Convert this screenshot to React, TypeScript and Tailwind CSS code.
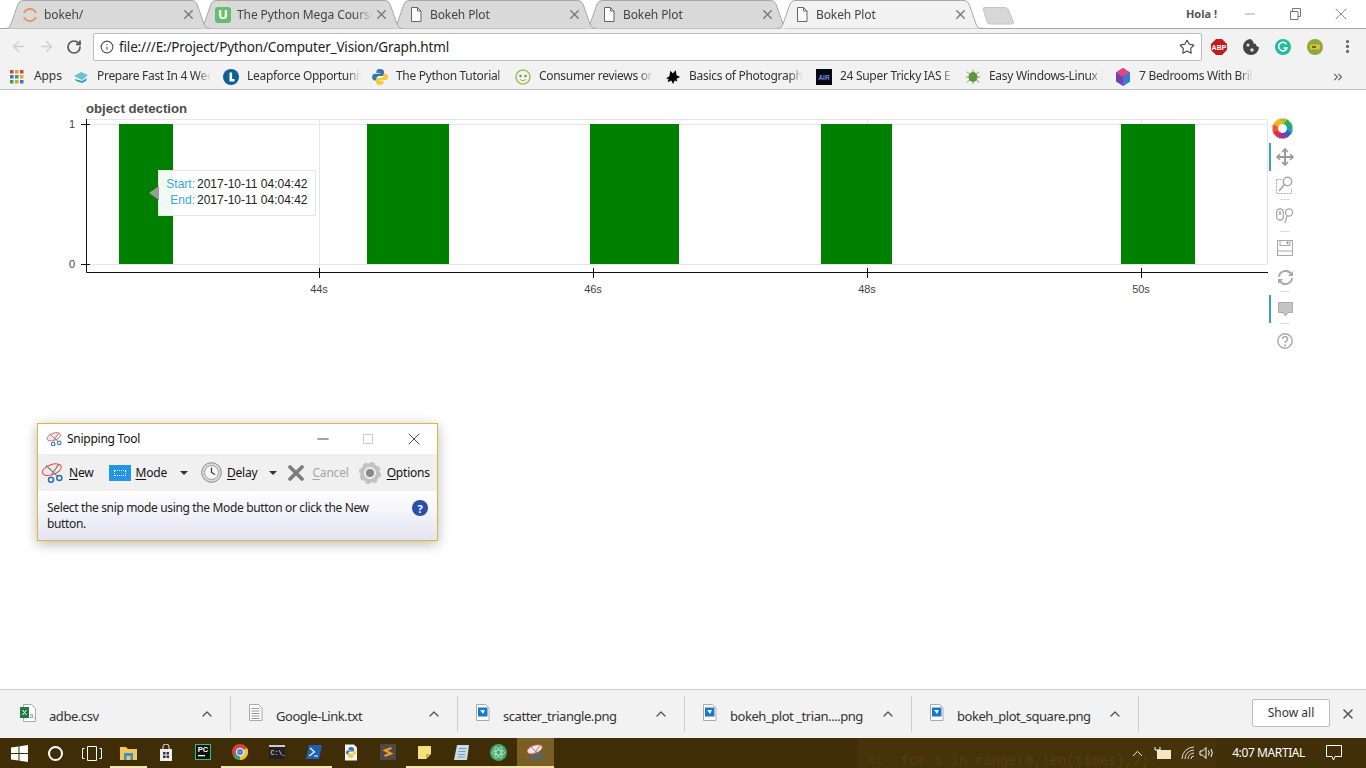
import React from "react";
import { ArrowLeft, ArrowRight, RotateCw, Info, Star, X, Minus, ChevronUp, ChevronsRight, MoreVertical } from "lucide-react";

const UI = "font-['Noto_Sans',sans-serif]";

function TabShape({ active }: { active?: boolean }) {
  return (
    <svg className="absolute inset-0" width="205" height="29" viewBox="0 0 205 29">
      <path
        d="M0 28.5 L3 28 Q5 27 6 24 L13 4 Q14.5 0.5 18 0.5 L187 0.5 Q190.5 0.5 192 4 L199 24 Q200 27 202 28 L205 28.5"
        fill={active ? "#f2f2f2" : "#d9d9d9"}
        stroke="#a8a8a8"
        strokeWidth="1"
      />
    </svg>
  );
}

function PageIcon() {
  return (
    <svg width="12" height="15" viewBox="0 0 12 15" fill="none" stroke="#666" strokeWidth="1">
      <path d="M1.5 .5h6l3.5 3.5v10.5h-9.5z" fill="#fafafa" />
      <path d="M7.5 .5v3.5h3.5" />
    </svg>
  );
}

const tabs = [
  {
    title: "bokeh/",
    z: "z-[5]",
    icon: (
      <svg width="16" height="16" viewBox="0 0 16 16" fill="none" stroke="#f0905a" strokeWidth="1.8">
        <path d="M2 6a6.5 6.5 0 0 1 12 0" />
        <path d="M2 10a6.5 6.5 0 0 0 12 0" />
      </svg>
    ),
  },
  {
    title: "The Python Mega Course",
    z: "z-[4]",
    icon: (
      <span className="flex h-4 w-4 items-center justify-center rounded-[3px] bg-[#68bd6c] text-[13px] font-bold leading-none text-white">U</span>
    ),
  },
  { title: "Bokeh Plot", z: "z-[3]", icon: <PageIcon /> },
  { title: "Bokeh Plot", z: "z-[2]", icon: <PageIcon /> },
  { title: "Bokeh Plot", z: "z-[6]", icon: <PageIcon />, active: true },
];

function TabStrip() {
  return (
    <div className="relative flex h-[29px] shrink-0 bg-white pl-[5px]">
      <div className="absolute bottom-0 left-0 right-0 h-px bg-[#a8a8a8]" />
      {tabs.map((t, i) => (
        <div key={i} className={`relative -mr-3 flex h-[29px] w-[205px] shrink-0 items-center pl-[16px] pr-[14px] ${t.z}`}>
          <TabShape active={t.active} />
          <div className="relative flex w-[18px] shrink-0 items-center justify-center">{t.icon}</div>
          <div className="relative ml-[5px] min-w-0 flex-1 whitespace-nowrap text-[12px] leading-[28px] tracking-[-0.1px] text-[#444] [mask-image:linear-gradient(to_right,black_86%,transparent)]">
            {t.title}
          </div>
          <X className="relative ml-[1px] shrink-0" size={15} strokeWidth={2.2} color="#777" />
        </div>
      ))}
      <svg className="relative z-[1] ml-[12px] mt-[7px] shrink-0" width="33" height="18" viewBox="0 0 33 18">
        <path d="M1 1.5 Q1 .5 3 .5 H23 Q25 .5 26 2 L31.500 15 Q32 17 30 17 H8 Q6 17 5 15 Z" fill="#d7d7d7" stroke="#c6c6c6" />
      </svg>
      <div className="relative ml-auto flex h-[28px] items-center pr-[15px]">
        <span className="mr-[25px] text-[11px] font-bold text-[#555]">Hola !</span>
        <Minus size={16} strokeWidth={1} color="#777" className="mr-[32px]" />
        <svg className="mr-[30px]" width="11" height="12" viewBox="0 0 11 12" fill="none" stroke="#777">
          <path d="M2.5 3V.5h8v8H8M.5 3.5h7.5v8H.5z" />
        </svg>
        <X size={20} strokeWidth={0.9} color="#666" />
      </div>
    </div>
  );
}

function AddressBar() {
  return (
    <div className="flex h-[35px] shrink-0 items-center bg-[#f2f2f2]">
      <ArrowLeft className="ml-[10px]" size={17} strokeWidth={2} color="#cfcfcf" />
      <ArrowRight className="ml-[11px]" size={17} strokeWidth={2} color="#cfcfcf" />
      <RotateCw className="ml-[11px]" size={16} strokeWidth={2.6} color="#555" />
      <div className="ml-[11px] flex h-[28px] w-[1109px] shrink-0 items-center rounded-[2px] border border-[#bdbdbd] bg-white pl-[6px] pr-[6px]">
        <Info size={14} strokeWidth={2} color="#555" />
        <span className="ml-[5px] mt-[2px] text-[13.5px] tracking-[-0.16px] text-[#222]">file:///E:/Project/Python/Computer_Vision/Graph.html</span>
        <Star className="ml-auto" size={16} strokeWidth={1.8} color="#555" />
      </div>
      <div className="ml-[9px] flex items-center gap-[16px]">
        <svg width="16" height="16" viewBox="0 0 16 16">
          <path d="M5 0h6l5 5v6l-5 5H5l-5-5V5z" fill="#c41a1a" />
          <text x="8" y="10.5" textAnchor="middle" fontSize="7" fontWeight="700" fill="#fff" fontFamily="Liberation Sans">ABP</text>
        </svg>
        <svg width="16" height="16" viewBox="0 0 16 16">
          <path d="M8 0a8 8 0 1 0 8 8 3 3 0 0 1-3-3 3 3 0 0 1-3-3 3 3 0 0 1-2-2z" fill="#444" />
          <circle cx="5" cy="6" r="1.6" fill="#ddd" />
          <circle cx="9" cy="11" r="1.8" fill="#ddd" />
        </svg>
        <svg width="16" height="16" viewBox="0 0 16 16">
          <circle cx="8" cy="8" r="8" fill="#1fbf8f" />
          <path d="M11.5 5.2A4.3 4.3 0 1 0 12 9H8.5" fill="none" stroke="#fff" strokeWidth="1.6" />
        </svg>
        <svg width="16" height="16" viewBox="0 0 16 16">
          <circle cx="8" cy="8" r="8" fill="#8caa3a" />
          <rect x="3" y="5.5" width="10" height="5" fill="#e0bd3a" />
          <rect x="5" y="7" width="4" height="2" fill="#5c6a22" />
        </svg>
        <MoreVertical size={17} strokeWidth={2.6} color="#666" />
      </div>
    </div>
  );
}

const bookmarks = [
  {
    t: "Prepare Fast In 4 Wee",
    w: "w-[150px]",
    icon: (
      <svg width="16" height="14" viewBox="0 0 16 14">
        <path d="M1 6l7-4 7 3-6 5z" fill="#66c2d8" />
        <path d="M2 9l7 2 5-3-1 3-4 2-6-2z" fill="#2f9cb8" />
      </svg>
    ),
  },
  {
    t: "Leapforce Opportunit",
    w: "w-[149px]",
    icon: (
      <svg width="16" height="16" viewBox="0 0 16 16">
        <circle cx="8" cy="8" r="8" fill="#0e5f94" />
        <path d="M6.5 3.5h2.6v6.5h2.4v2.4h-5z" fill="#fff" />
      </svg>
    ),
  },
  {
    t: "The Python Tutorial",
    w: "w-[143px]",
    icon: (
      <svg width="16" height="16" viewBox="0 0 16 16">
        <path d="M8 0C5 0 4.500 1.200 4.500 2.500V4H8.200v.7H3C1.200 4.700 0 6 0 8s1.200 3.500 3 3.500h1.500V9.500C4.500 8 5.700 7 7 7h3c1.200 0 2-.8 2-2V2.500C12 1 10.500 0 8 0z" fill="#3a76a8" />
        <path d="M8 16c3 0 3.500-1.200 3.500-2.500V12H7.800v-.7H13c1.800 0 3-1.300 3-3.300s-1.200-3.500-3-3.500h-1.500v2C11.500 8 10.300 9 9 9H6c-1.200 0-2 .8-2 2v2.500C4 15 5.500 16 8 16z" fill="#f4c93c" />
      </svg>
    ),
  },
  {
    t: "Consumer reviews on",
    w: "w-[150px]",
    icon: (
      <svg width="16" height="16" viewBox="0 0 16 16">
        <circle cx="8" cy="8" r="7" fill="#f4f6e4" stroke="#9cc36a" strokeWidth="1.6" />
        <circle cx="5.500" cy="7" r="1.300" fill="#5a8ec0" />
        <circle cx="10.500" cy="7" r="1.300" fill="#5a8ec0" />
        <path d="M5 10.500q3 2.500 6 0" fill="none" stroke="#c79a4a" />
      </svg>
    ),
  },
  {
    t: "Basics of Photograph",
    w: "w-[151px]",
    icon: (
      <svg width="18" height="18" viewBox="0 0 18 18">
        <path d="M1 11l4-3 1-6 3 3 3-4 1 6 4 2-4 2 1 3-3-1-2 4-2-4-4 2 1-4z" fill="#050505" />
      </svg>
    ),
  },
  {
    t: "24 Super Tricky IAS E",
    w: "w-[149px]",
    icon: (
      <svg width="16" height="16" viewBox="0 0 16 16">
        <rect width="16" height="16" fill="#06070f" />
        <text x="8" y="10.500" textAnchor="middle" fontSize="6.500" fontWeight="700" fill="#6c8ce0" fontFamily="Liberation Sans">AIR</text>
      </svg>
    ),
  },
  {
    t: "Easy Windows-Linux I",
    w: "w-[150px]",
    icon: (
      <svg width="18" height="18" viewBox="0 0 18 18">
        <g stroke="#6b9a40" strokeWidth="1">
          <path d="M2 3l14 12M16 3L2 15M1 9h16M9 1v16" />
        </g>
        <ellipse cx="9" cy="9" rx="5" ry="5.500" fill="#5f9440" />
      </svg>
    ),
  },
  {
    t: "7 Bedrooms With Bril",
    w: "w-[153px]",
    icon: (
      <svg width="16" height="18" viewBox="0 0 16 18">
        <path d="M8 0l7 4.500v9L8 18l-7-4.500v-9z" fill="#7a3db0" />
        <path d="M8 0l7 4.500L8 9 1 4.500z" fill="#e2457f" />
        <path d="M8 9l7-4.500v9L8 18z" fill="#2f7fd6" />
      </svg>
    ),
  },
];

function Bookmarks() {
  return (
    <div className="flex h-[26px] shrink-0 items-center border-b border-[#c4c4c4] bg-[#f2f2f2] pl-[10px]">
      <svg width="14" height="14" viewBox="0 0 14 14" className="shrink-0">
        {[0, 5, 10].map((y) =>
          [0, 5, 10].map((x) => (
            <rect key={`${x}${y}`} x={x} y={y} width="3.500" height="3.500" fill={y === 0 ? (x === 5 ? "#e0a030" : "#d8483a") : y === 5 ? (x === 0 ? "#3b78c8" : x === 5 ? "#40a060" : "#e0b030") : x === 0 ? "#40a060" : x === 5 ? "#e0a030" : "#3b78c8"} />
          ))
        )}
      </svg>
      <span className="ml-[10px] -mt-[2px] w-[39px] shrink-0 text-[12px] tracking-[-0.1px] text-[#333]">Apps</span>
      {bookmarks.map((b) => (
        <div key={b.t} className={`flex shrink-0 items-center ${b.w}`}>
          <div className="flex w-[16px] shrink-0 justify-center">{b.icon}</div>
          <div className="ml-[8px] -mt-[2px] w-[114px] whitespace-nowrap text-[12px] tracking-[-0.3px] text-[#333] [mask-image:linear-gradient(to_right,black_88%,transparent)]">{b.t}</div>
        </div>
      ))}
      <ChevronsRight className="ml-[63px] shrink-0" size={14} strokeWidth={2} color="#666" />
    </div>
  );
}

const bars: [number, number][] = [
  [119, 173],
  [367, 449],
  [590, 679],
  [821, 892],
  [1121, 1195],
];

function Chart() {
  const f = "Liberation Sans";
  return (
    <svg className="absolute left-0 top-0" width="1270" height="210" viewBox="0 90 1270 210">
      <text x="86" y="113" fontFamily={f} fontSize="13.200" fontWeight="700" fill="#4d4d4d">object detection</text>
      <path d="M87 119.500H1267.500V264" fill="none" stroke="#e6e6e6" />
      {[319, 593, 867, 1141].map((x) => (
        <path key={x} d={`M${x}.5 119V272`} stroke="#e6e6e6" />
      ))}
      <path d="M87 124.500H1267M87 264.500H1267" stroke="#e6e6e6" />
      {bars.map(([a, b]) => (
        <rect key={a} x={a} y={124} width={b - a} height={140} fill="#008000" />
      ))}
      <path d="M86.500 119V272.500H1268" fill="none" stroke="#111" />
      <path d="M81 124.500H90M81 264.500H90" stroke="#111" />
      {[319, 593, 867, 1141].map((x) => (
        <path key={x} d={`M${x}.5 268V278`} stroke="#111" />
      ))}
      <text x="75" y="128" textAnchor="end" fontFamily={f} fontSize="11" fill="#444">1</text>
      <text x="75" y="268" textAnchor="end" fontFamily={f} fontSize="11" fill="#444">0</text>
      {[
        [319, "44s"],
        [593, "46s"],
        [867, "48s"],
        [1141, "50s"],
      ].map(([x, s]) => (
        <text key={s as string} x={x as number} y="293" textAnchor="middle" fontFamily={f} fontSize="11" fill="#444">{s}</text>
      ))}
    </svg>
  );
}

function Tooltip() {
  return (
    <div className="absolute left-[158px] top-[80px] h-[46px] w-[158px] border border-[#e5e5e5] bg-white/95 pl-[7px] pt-[5px] font-['Liberation_Sans',sans-serif] text-[12px] leading-[16px]">
      <div className="absolute left-[-10px] top-[15px] h-0 w-0 border-y-[7px] border-r-[10px] border-y-transparent border-r-[#9a9a9a]" />
      <div className="flex whitespace-nowrap"><span className="w-[29px] text-right text-[#3aa8d8]">Start:</span><span className="ml-[2px] text-[#222]">2017-10-11 04:04:42</span></div>
      <div className="flex whitespace-nowrap"><span className="w-[29px] text-right text-[#3aa8d8]">End:</span><span className="ml-[2px] text-[#222]">2017-10-11 04:04:42</span></div>
    </div>
  );
}

function ToolSep() {
  return <div className="ml-[11px] h-px w-[10px] bg-[#dcdcdc]" />;
}

function BokehLogo() {
  const colors = ["#9cc43a", "#2fae5a", "#1a9fc0", "#3a5fb8", "#a3308e", "#e0305a", "#ee5a2a", "#f6b32a"];
  return (
    <svg width="21" height="21" viewBox="-10.500 -10.500 21 21">
      {colors.map((c, i) => (
        <path key={c} d="M-3.500 -10L3.500 -10L5.500 -3.500L0 -4.500L-2 -4z" fill={c} transform={`rotate(${i * 45})`} />
      ))}
    </svg>
  );
}

function BokehTools() {
  const c = "#a9a9a9";
  return (
    <div className="ml-[-1px] flex w-[30px] shrink-0 flex-col pt-[28px]">
      <div className="flex h-[21px] items-center justify-center pr-[3px]"><BokehLogo /></div>
      <div className="mt-[4px] flex h-[28px] items-center justify-center border-l-2 border-[#3aa0c0]">
        <svg width="20" height="20" viewBox="0 0 20 20" fill="none" stroke="#9a9a9a" strokeWidth="2">
          <path d="M10 2v16M2 10h16" />
          <path d="M7 5l3-3 3 3M7 15l3 3 3-3M5 7l-3 3 3 3M15 7l3 3-3 3" strokeWidth="1.600" />
        </svg>
      </div>
      <div className="flex h-[28px] items-center justify-center pl-[2px]">
        <svg width="18" height="18" viewBox="0 0 18 18" fill="none" stroke={c}>
          <path d="M.5 3.500h6M.5 3.500v14h15v-5" strokeDasharray="2 1" />
          <circle cx="11.500" cy="5.500" r="4.200" strokeWidth="1.500" />
          <path d="M8.500 8.500L3 15" strokeWidth="1.800" />
        </svg>
      </div>
      <ToolSep />
      <div className="flex h-[31px] items-center justify-center pl-[2px]">
        <svg width="18" height="16" viewBox="0 0 18 16" fill="none" stroke={c} strokeWidth="1.300">
          <rect x=".7" y="1" width="6.600" height="11" rx="3" />
          <rect x="2.800" y="3" width="2.400" height="4" fill="#bbb" stroke="none" />
          <circle cx="13" cy="4.500" r="3.600" />
          <path d="M11 8l-2 7" />
        </svg>
      </div>
      <ToolSep />
      <div className="flex h-[32px] items-center justify-center pl-[2px]">
        <svg width="16" height="16" viewBox="0 0 16 16" fill="none" stroke={c} strokeWidth="1.100">
          <rect x=".5" y=".5" width="15" height="15" />
          <path d="M3 .5v5h10v-5M.5 11h15" />
          <rect x="9.500" y="1.500" width="2" height="2.500" fill="#999" stroke="none" />
        </svg>
      </div>
      <div className="flex h-[27px] items-center justify-center pl-[2px]">
        <svg width="17" height="17" viewBox="0 0 17 17" fill="none" stroke={c} strokeWidth="2">
          <path d="M2 8a6.500 6.500 0 0 1 12-3M15 9a6.500 6.500 0 0 1-12 3" />
          <path d="M16 7H11l5-5zM1 10h5l-5 5z" fill={c} stroke="none" />
        </svg>
      </div>
      <div className="ml-[11px] h-px w-[10px] bg-[#dcdcdc]" />
      <div className="mt-[3px] flex h-[28px] items-center justify-center border-l-2 border-[#3aa0c0]">
        <svg width="15" height="15" viewBox="0 0 15 15">
          <path d="M.5 .5h14v10h-4.500l-2.500 3.500-2.500-3.500h-4.500z" fill="#c4c4c4" stroke="#aaa" />
        </svg>
      </div>
      <ToolSep />
      <div className="flex h-[33px] items-center justify-center pl-[2px]">
        <svg width="16" height="16" viewBox="0 0 16 16" fill="none" stroke={c} strokeWidth="1.400">
          <circle cx="8" cy="8" r="7.200" />
          <path d="M5.500 6a2.500 2.500 0 1 1 3.800 2.100c-.9.600-1.300 1-1.300 2" strokeWidth="1.600" />
          <circle cx="8" cy="12.300" r="1" fill={c} stroke="none" />
        </svg>
      </div>
    </div>
  );
}

function ScissorsIcon({ s = 30 }: { s?: number }) {
  return (
    <svg width={s} height={(s * 24) / 30} viewBox="0 0 30 24" fill="none">
      <ellipse cx="13" cy="8" rx="12" ry="6" stroke="#d94a4a" strokeWidth="1.200" transform="rotate(-20 13 8)" fill="#f4e6e6" />
      <path d="M6 3l14 13M21 2L12 15" stroke="#777" strokeWidth="1.300" />
      <circle cx="22" cy="18" r="3" stroke="#2a6fb5" strokeWidth="1.800" />
      <circle cx="12" cy="20" r="3" stroke="#2a6fb5" strokeWidth="1.800" />
    </svg>
  );
}

function U({ children }: { children: React.ReactNode }) {
  return <span className="underline underline-offset-2">{children}</span>;
}

function Caret() {
  return <div className="h-0 w-0 border-x-[4px] border-t-[4px] border-x-transparent border-t-[#333]" />;
}

function SnippingTool() {
  return (
    <div className="absolute left-[37px] top-[333px] z-10 h-[118px] w-[401px] border border-[#e8b33a] bg-white font-['Noto_Sans',sans-serif] text-[12px] text-[#111] shadow-[0_3px_12px_rgba(0,0,0,0.28)]">
      <div className="flex h-[30px] items-center pl-[8px]">
        <ScissorsIcon s={18} />
        <span className="ml-[3px] text-[12px] tracking-[-0.25px]">Snipping Tool</span>
        <Minus className="ml-auto" size={18} strokeWidth={1.100} color="#222" />
        <div className="ml-[31px] h-[10px] w-[10px] border border-[#ccc]" />
        <X className="ml-[31px] mr-[13px]" size={20} strokeWidth={1} color="#222" />
      </div>
      <div className="flex h-[37px] items-center bg-[#f0f0f0] pl-[3px] tracking-[-0.2px]">
        <ScissorsIcon s={25} />
        <span className="ml-[3px]"><U>N</U>ew</span>
        <div className="ml-[16px] flex h-[16px] w-[22px] items-center justify-center bg-[#2196e8]">
          <div className="h-[6px] w-[12px] border border-dotted border-white" />
        </div>
        <span className="ml-[4px]"><U>M</U>ode</span>
        <div className="ml-[13px]"><Caret /></div>
        <svg className="ml-[13px]" width="21" height="21" viewBox="0 0 21 21" fill="none">
          <circle cx="10.500" cy="10.500" r="9.800" fill="#ddd" stroke="#888" />
          <circle cx="10.500" cy="10.500" r="7" fill="#f6f6f6" stroke="#999" />
          <path d="M10.500 5.500v5l3.500 2" stroke="#333" strokeWidth="1.200" />
        </svg>
        <span className="ml-[5px]"><U>D</U>elay</span>
        <div className="ml-[12px]"><Caret /></div>
        <X className="ml-[7px]" size={24} strokeWidth={3.800} color="#7d7d7d" />
        <span className="ml-[4px] text-[#a5a5a5]"><U>C</U>ancel</span>
        <svg className="ml-[10px]" width="22" height="22" viewBox="0 0 22 22">
          <circle cx="11" cy="11" r="8" fill="none" stroke="#c2c2c2" strokeWidth="4" />
          <circle cx="11" cy="11" r="10" fill="none" stroke="#c2c2c2" strokeWidth="2.400" strokeDasharray="4 3.900" />
          <circle cx="11" cy="11" r="4" fill="#8a8a8a" />
        </svg>
        <span className="ml-[6px]"><U>O</U>ptions</span>
      </div>
      <div className="flex h-[49px] bg-gradient-to-b from-white to-[#e4e4f2] pl-[9px] pr-[9px] pt-[9px]">
        <p className="w-[345px] leading-[16px] tracking-[-0.35px] text-[#222]">Select the snip mode using the Mode button or click the New button.</p>
        <div className="ml-auto flex h-[16px] w-[16px] items-center justify-center rounded-full bg-[#2b4fa8] text-[11px] font-bold leading-none text-white">?</div>
      </div>
    </div>
  );
}

function DocIcon({ kind }: { kind: "xls" | "txt" | "png" }) {
  if (kind === "xls") {
    return (
      <svg width="16" height="18" viewBox="0 0 16 18" fill="none">
        <path d="M3.500 .5h8l4 4v13h-12z" fill="#fff" stroke="#aaa" />
        <rect y="3" width="9" height="11" fill="#1f7a44" />
        <path d="M2.500 6l4 5M6.500 6l-4 5" stroke="#fff" />
        <text x="9.500" y="14" fontSize="7" fill="#888" fontFamily="Liberation Sans">a,</text>
      </svg>
    );
  }
  return (
    <svg width="16" height="17" viewBox="0 0 16 17" fill="none">
      <path d="M.5 .5h9l3.500 3.500v12.500h-12.500z" fill="#fff" stroke="#aaa" />
      {kind === "txt" && <path d="M2.500 4.500h8M2.500 7h8M2.500 9.500h8M2.500 12h8M2.500 14.500h8" stroke="#999" />}
      {kind === "png" && (
        <>
          <rect x="2" y="3.500" width="9.500" height="9" fill="#1c76c9" />
          <path d="M4 6h5l-2 4z" fill="#dff" />
        </>
      )}
    </svg>
  );
}

const downloads: { n: string; k: "xls" | "txt" | "png" }[] = [
  { n: "adbe.csv", k: "xls" },
  { n: "Google-Link.txt", k: "txt" },
  { n: "scatter_triangle.png", k: "png" },
  { n: "bokeh_plot _trian....png", k: "png" },
  { n: "bokeh_plot_square.png", k: "png" },
];

function Downloads() {
  return (
    <div className="flex h-[49px] shrink-0 items-center border-t border-[#cfcfcf] bg-[#f2f2f2]">
      {downloads.map((d, i) => (
        <div key={d.n} className={`flex h-[36px] items-center border-r border-[#cdcdcd] ${i === 0 ? "w-[231px] pl-[20px]" : "w-[227px] pl-[18px]"}`}>
          <div className="-mt-[3px] w-[16px] shrink-0"><DocIcon kind={d.k} /></div>
          <span className={`mt-[5px] text-[13px] tracking-[-0.45px] text-[#333] ${i === 0 ? "ml-[13px]" : "ml-[11px]"}`}>{d.n}</span>
          <ChevronUp className="ml-auto mr-[15px]" size={16} strokeWidth={2} color="#555" />
        </div>
      ))}
      <button className="mb-[2px] ml-auto h-[28px] w-[78px] rounded-[2px] border border-[#bdbdbd] bg-white text-[12px] text-[#333]">Show all</button>
      <X className="ml-[10px] mr-[10px]" size={16} strokeWidth={2.400} color="#555" />
    </div>
  );
}

const taskIcons: { el: React.ReactNode; on?: boolean; active?: boolean }[] = [
  {
    on: true,
    el: (
      <svg width="17" height="15" viewBox="0 0 17 15">
        <path d="M0 2h6l2 2h9v11H0z" fill="#f2c65a" />
        <path d="M4 8h9v7h-2.500v-4h-4v4H4z" fill="#3a93c8" />
      </svg>
    ),
  },
  {
    el: (
      <svg width="14" height="17" viewBox="0 0 14 17">
        <path d="M1 5h12v12H1z" fill="#eee" />
        <path d="M4 5V2.500a3 2.500 0 0 1 6 0V5" fill="none" stroke="#eee" />
        <path d="M4 8h2.500v2.500H4zM7.500 8H10v2.500H7.500zM4 11.500h2.500V14H4zM7.500 11.500H10V14H7.500z" fill="#333" />
      </svg>
    ),
  },
  {
    el: (
      <svg width="16" height="16" viewBox="0 0 16 16">
        <rect x=".5" y=".5" width="15" height="15" fill="#111" stroke="#22c28c" />
        <text x="8" y="8" textAnchor="middle" fontSize="7.500" fontWeight="700" fill="#fff" fontFamily="Liberation Sans">PC</text>
        <rect x="3" y="11" width="7" height="1.300" fill="#fff" />
      </svg>
    ),
  },
  {
    on: true,
    el: (
      <svg width="16" height="16" viewBox="0 0 16 16">
        <circle cx="8" cy="8" r="8" fill="#d8433a" />
        <path d="M8 8L1 12a8 8 0 0 0 7 4z" fill="#3aa457" />
        <path d="M8 8l7 -4a8 8 0 0 1 -7 12z" fill="#f3c22e" />
        <circle cx="8" cy="8" r="3.800" fill="#4a8cf0" stroke="#fff" />
      </svg>
    ),
  },
  {
    on: true,
    el: (
      <svg width="16" height="14" viewBox="0 0 16 14">
        <rect width="16" height="14" fill="#222" />
        <rect width="16" height="2" fill="#ccc" />
        <text x="1.500" y="10" fontSize="6.500" fill="#eee" fontFamily="Liberation Mono">C:\_</text>
      </svg>
    ),
  },
  {
    on: true,
    el: (
      <svg width="16" height="14" viewBox="0 0 16 14">
        <path d="M3 0h13l-3 14H0z" fill="#1f5fb5" />
        <path d="M4 3l4.500 4L3 11M8 11h4" fill="none" stroke="#fff" strokeWidth="1.200" />
      </svg>
    ),
  },
  {
    el: (
      <svg width="16" height="17" viewBox="0 0 16 17">
        <path d="M2 .5h9l3 3V16.500H2z" fill="#f4f4f4" />
        <path d="M8 3c-2 0-2.500 1-2.500 2v1H8v.5H4.500C3.500 6.500 3 7.500 3 8.500s.5 2 1.500 2h1V9c0-1 1-1.500 2-1.500h2C10.500 7.500 11 7 11 6V5c0-1-1-2-3-2z" fill="#3a76a8" />
        <path d="M8 14c2 0 2.500-1 2.500-2v-1H8v-.5h3.500c1 0 1.500-1 1.500-2s-.5-2-1.500-2h-1V8c0 1-1 1.500-2 1.500h-2C5.500 9.500 5 10 5 11v1c0 1 1 2 3 2z" fill="#f4c93c" />
      </svg>
    ),
  },
  {
    el: (
      <svg width="16" height="16" viewBox="0 0 16 16">
        <rect width="16" height="16" rx="1" fill="#4a4a4a" />
        <path d="M11.500 4L5 6.500l6 3-6.500 2.500" fill="none" stroke="#f39a1f" strokeWidth="2.200" />
      </svg>
    ),
  },
  {
    on: true,
    el: (
      <svg width="13" height="13" viewBox="0 0 13 13">
        <path d="M0 0h13v8l-5 5H0z" fill="#f7e07a" />
        <path d="M8 13V8h5z" fill="#c9b04e" />
      </svg>
    ),
  },
  {
    on: true,
    el: (
      <svg width="15" height="16" viewBox="0 0 15 16">
        <path d="M3 1h12l-2 15H0z" fill="#c7ddea" />
        <path d="M5 4.500h7M4.500 7.500h7M4 10.500h7M3.700 13h7" stroke="#7a9aac" />
      </svg>
    ),
  },
  {
    on: true,
    el: (
      <svg width="17" height="17" viewBox="0 0 18 18">
        <circle cx="9" cy="9" r="9" fill="#43a66a" />
        <g fill="none" stroke="#cdebd6" strokeWidth=".8">
          <ellipse cx="9" cy="9" rx="6.500" ry="2.500" />
          <ellipse cx="9" cy="9" rx="6.500" ry="2.500" transform="rotate(60 9 9)" />
          <ellipse cx="9" cy="9" rx="6.500" ry="2.500" transform="rotate(120 9 9)" />
        </g>
      </svg>
    ),
  },
  { on: true, active: true, el: <ScissorsIcon s={20} /> },
];

function Taskbar() {
  return (
    <div className="relative flex h-[30px] shrink-0 items-stretch overflow-hidden bg-[#3f2d08] text-white">
      <div className="absolute bottom-0 left-[857px] right-0 top-0 bg-[#46330a]" />
      <div className="absolute left-[901px] top-[17px] whitespace-nowrap font-['Liberation_Mono',monospace] text-[13.8px] leading-[13px] text-[#54400f]">for i in range(0,len(times),2):</div>
      <div className="absolute left-[868px] top-[17px] whitespace-nowrap font-['Liberation_Mono',monospace] text-[12px] leading-[13px] text-[#4e3b0e]">01</div>
      <div className="absolute bottom-0 right-0 top-0 w-[150px] bg-[#3f2e09]/70" />
      <div className="relative flex w-[37px] items-center justify-center pl-[2px]">
        <svg width="17" height="17" viewBox="0 0 17 17" fill="#fff">
          <path d="M0 2.500L7.500 1.400v6.500H0zM8.500 1.300L17 0v7.900H8.500zM0 9h7.500v6.500L0 14.500zM8.500 9H17v8l-8.500-1.200z" />
        </svg>
      </div>
      <div className="relative flex w-[36px] items-center justify-center">
        <div className="h-[15px] w-[15px] rounded-full border-2 border-white" />
      </div>
      <div className="relative flex w-[37px] items-center justify-center">
        <svg width="20" height="15" viewBox="0 0 20 15" fill="none" stroke="#fff">
          <path d="M5.500 .5h9v14h-9zM2.500 2.500H.5v10h2M17.500 2.500h2v10h-2" />
        </svg>
      </div>
      {taskIcons.map((t, i) => (
        <div key={i} className={`relative flex w-[37px] shrink-0 items-center justify-center ${t.active ? "bg-[#7a5f25]" : ""} ${t.on ? "border-b-2 border-[#f5e3b0]" : "border-b-2 border-transparent"}`}>
          {t.el}
        </div>
      ))}
      <div className="relative ml-auto flex items-center pr-[24px]">
        <ChevronUp size={17} strokeWidth={1.300} color="#fff" />
        <svg className="ml-[8px]" width="17" height="12" viewBox="0 0 17 12">
          <rect x="3" y="3" width="14" height="9" fill="#f4e6c0" />
          <path d="M1 0v3h5V0M3.500 3v3" fill="none" stroke="#fff" />
        </svg>
        <svg className="ml-[10px]" width="15" height="14" viewBox="0 0 15 14" fill="none" stroke="#ddd">
          <path d="M1 13A12 12 0 0 1 13 1M4 13a9 9 0 0 1 9-9M7 13a6 6 0 0 1 6-6M10 13a3 3 0 0 1 3-3" />
        </svg>
        <svg className="ml-[3px]" width="16" height="14" viewBox="0 0 16 14" fill="none" stroke="#fff">
          <path d="M1 5h2.500L7 1.500v11L3.500 9H1zM9.500 4.500q1.500 2.500 0 5M12 3q2.500 4 0 8" />
        </svg>
        <span className="ml-[17px] whitespace-nowrap font-['Noto_Sans',sans-serif] text-[12px] tracking-[-0.4px]">4:07 MARTIAL</span>
        <svg className="ml-[21px]" width="16" height="16" viewBox="0 0 16 16" fill="none" stroke="#fff">
          <path d="M.5 .5h15v11H9l-1.500 3.500L6 11.500H.5z" />
        </svg>
      </div>
    </div>
  );
}

export default function App() {
  return (
    <div className={`flex h-[768px] w-[1366px] flex-col overflow-hidden bg-white ${UI}`}>
      <TabStrip />
      <AddressBar />
      <Bookmarks />
      <main className="relative flex min-h-0 flex-1 justify-end pr-[67px]">
        <Chart />
        <Tooltip />
        <BokehTools />
        <SnippingTool />
      </main>
      <Downloads />
      <Taskbar />
    </div>
  );
}
